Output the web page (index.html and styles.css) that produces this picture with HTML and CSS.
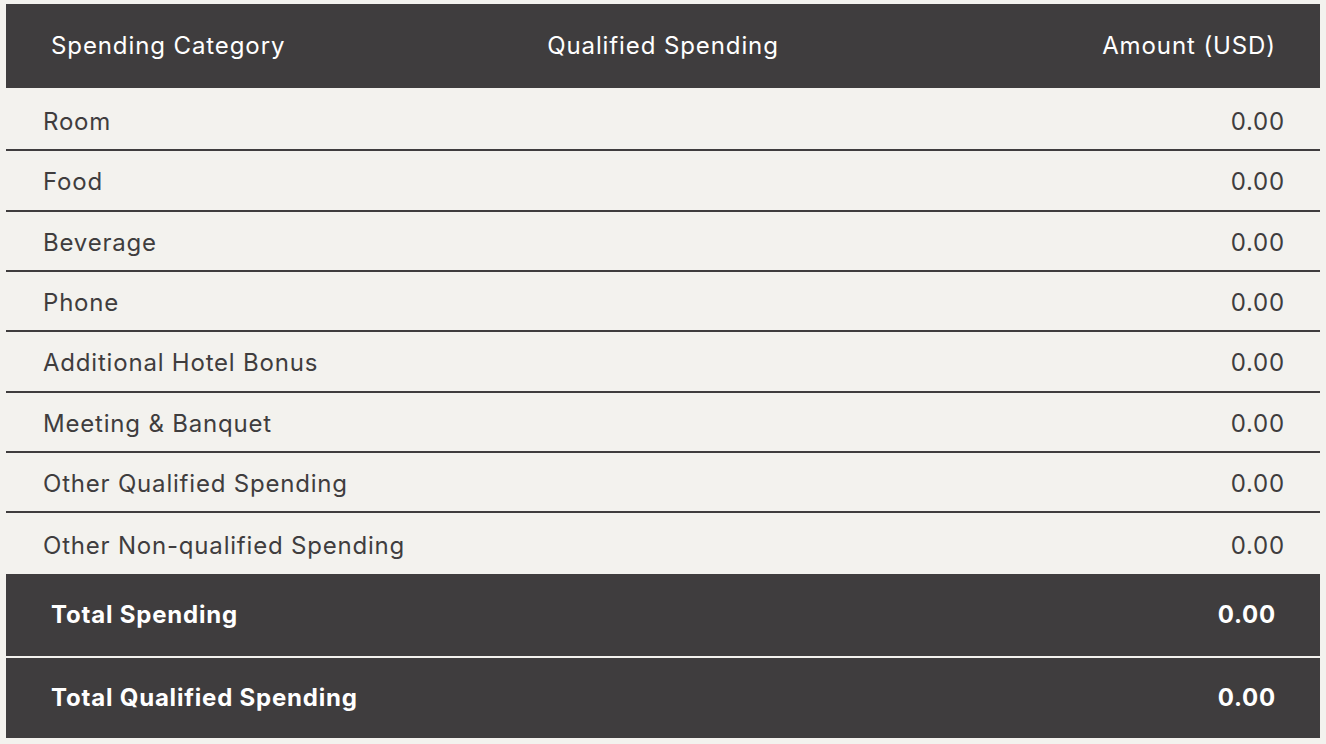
FILE: index.html
```html
<!DOCTYPE html>
<html lang="en">
<head>
<meta charset="utf-8">
<title>Spending</title>
<link rel="stylesheet" href="styles.css">
</head>
<body>
<div class="table">
  <div class="row head">
    <div class="c left">Spending Category</div>
    <div class="c mid">Qualified Spending</div>
    <div class="c right">Amount (USD)</div>
  </div>
  <div class="body">
    <div class="row item"><div class="c left">Room</div><div class="c mid"></div><div class="c right">0.00</div></div>
    <div class="row item"><div class="c left">Food</div><div class="c mid"></div><div class="c right">0.00</div></div>
    <div class="row item"><div class="c left">Beverage</div><div class="c mid"></div><div class="c right">0.00</div></div>
    <div class="row item"><div class="c left">Phone</div><div class="c mid"></div><div class="c right">0.00</div></div>
    <div class="row item"><div class="c left">Additional Hotel Bonus</div><div class="c mid"></div><div class="c right">0.00</div></div>
    <div class="row item"><div class="c left">Meeting &amp; Banquet</div><div class="c mid"></div><div class="c right">0.00</div></div>
    <div class="row item"><div class="c left">Other Qualified Spending</div><div class="c mid"></div><div class="c right">0.00</div></div>
    <div class="row item last"><div class="c left">Other Non-qualified Spending</div><div class="c mid"></div><div class="c right">0.00</div></div>
  </div>
  <div class="row total first">
    <div class="c left">Total Spending</div><div class="c mid"></div><div class="c right">0.00</div>
  </div>
  <div class="row total second">
    <div class="c left">Total Qualified Spending</div><div class="c mid"></div><div class="c right">0.00</div>
  </div>
</div>
</body>
</html>
```
FILE: styles.css
```css
html, body {
  margin: 0;
  padding: 0;
  background: #f3f2ee;
}
body {
  padding: 4px 6px 6px 6px;
  font-family: Inter, "Noto Sans", sans-serif;
  font-size: 24px;
  letter-spacing: 0.8px;
  color: #3f3d3e;
}
.table {
  display: flex;
  flex-direction: column;
  width: 1314px;
}
.row {
  display: grid;
  grid-template-columns: 1fr 1fr 1fr;
  align-items: center;
  box-sizing: border-box;
}
.c.mid { text-align: center; }
.c.right { text-align: right; }
.head {
  height: 84px;
  background: #3f3d3e;
  color: #ffffff;
  padding: 0 45px 2px 45px;
  letter-spacing: 0.9px;
}
.head .c.right { margin-right: -1px; }
.body {
  padding-top: 3px;
  display: flex;
  flex-direction: column;
}
.item {
  height: 60.33px;
  padding: 3px 37px 0 37px;
  border-bottom: 2px solid #3f3d3e;
}
.item .c.right { margin-right: -2px; }
.item.last {
  border-bottom: none;
  padding-top: 4px;
}
.total {
  background: #3f3d3e;
  color: #ffffff;
  font-weight: 700;
  padding: 0 45px 1px 45px;
}
.total .c.right { margin-right: -1px; }
.total.first { height: 82px; }
.total.second { height: 80px; margin-top: 2px; }
```
